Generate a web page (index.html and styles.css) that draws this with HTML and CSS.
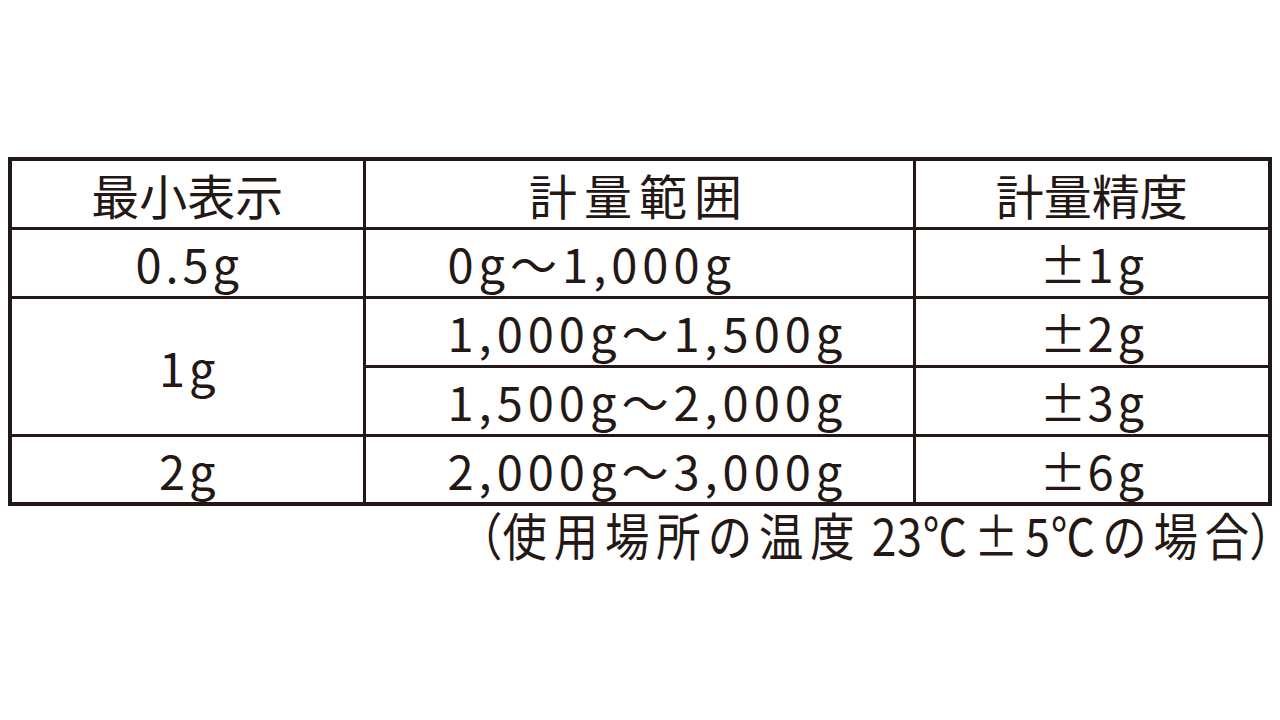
FILE: index.html
```html
<!DOCTYPE html>
<html lang="ja">
<head>
<meta charset="utf-8">
<title>計量仕様</title>
<link rel="stylesheet" href="styles.css">
</head>
<body>
<div class="page">
  <table class="spec">
    <colgroup>
      <col class="c1">
      <col class="c2">
      <col class="c3">
    </colgroup>
    <thead>
      <tr class="row head">
        <th>最小表示</th>
        <th class="spaced">計量範囲</th>
        <th>計量精度</th>
      </tr>
    </thead>
    <tbody>
      <tr class="row">
        <td class="num">0.5g</td>
        <td class="range">0g～1,000g</td>
        <td class="num"><span class="pm">±</span>1g</td>
      </tr>
      <tr class="row">
        <td class="num" rowspan="2">1g</td>
        <td class="range">1,000g～1,500g</td>
        <td class="num"><span class="pm">±</span>2g</td>
      </tr>
      <tr class="row">
        <td class="range">1,500g～2,000g</td>
        <td class="num"><span class="pm">±</span>3g</td>
      </tr>
      <tr class="row">
        <td class="num">2g</td>
        <td class="range">2,000g～3,000g</td>
        <td class="num"><span class="pm">±</span>6g</td>
      </tr>
    </tbody>
  </table>
  <div class="note"><span class="note-text"><span class="open">（</span>使用場所の温度<span class="gap"> </span><span class="digits">23</span>℃±<span class="digits">5</span>℃の場<span class="last">合</span><span class="close">）</span></span></div>
</div>
</body>
</html>
```

FILE: styles.css
```css
html, body {
  margin: 0;
  padding: 0;
  background: #ffffff;
}

body {
  font-family: "Noto Sans CJK JP", "Noto Sans", sans-serif;
  color: #231815;
}

.page {
  padding: 157px 12px 0 8px;
}

.spec {
  width: 1260px;
  border-collapse: collapse;
  table-layout: fixed;
  border: 4px solid #231815;
}

.c1 { width: 354px; }
.c2 { width: 550px; }
.c3 { width: 356px; }

.spec th,
.spec td {
  border: 3px solid #231815;
  padding: 0;
  text-align: center;
  vertical-align: middle;
  font-weight: 400;
  font-size: 47px;
  line-height: 1;
  white-space: nowrap;
}

.row {
  height: 69px;
}

.head th {
  font-size: 48px;
}

.spec th.spaced {
  letter-spacing: 7px;
}

.spec td.num {
  letter-spacing: 4px;
  padding-left: 4px;
}

.spec td.range {
  text-align: left;
  padding-left: 82px;
  letter-spacing: 5px;
}

.pm {
  display: inline-block;
  width: 48px;
  text-align: left;
}

.note {
  text-align: right;
  padding-top: 0;
}

.note-text {
  display: inline-block;
  font-size: 51px;
  line-height: 1.1;
  letter-spacing: 8px;
  transform: scaleX(0.87);
  transform-origin: right center;
  margin-right: -6px;
  white-space: nowrap;
}

.note-text .open {
  letter-spacing: 0;
}

.note-text .digits {
  letter-spacing: 1px;
}

.note-text .gap {
  letter-spacing: 0;
}

.note-text .last {
  letter-spacing: 0;
}

.note-text .close {
  letter-spacing: -22px;
}
```
